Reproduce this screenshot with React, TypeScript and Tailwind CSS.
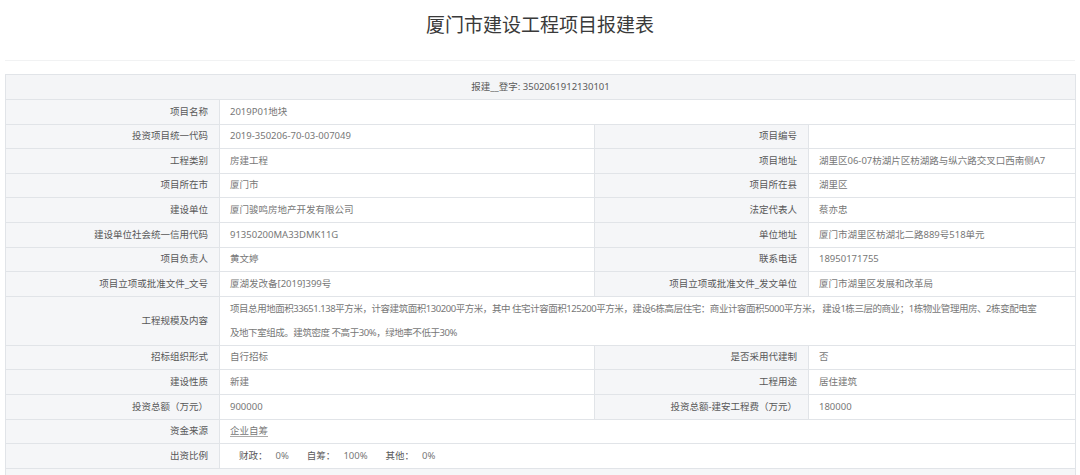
import type { ReactNode } from 'react';

const font = { fontFamily: '"Noto Sans", "Noto Sans CJK SC", sans-serif' };

function Label({ children }: { children?: ReactNode }) {
  return (
    <td className="h-[24.6px] border border-[#e1e4e8] bg-[#f5f6f8] pr-[11px] text-right align-middle text-[#585858] whitespace-nowrap">
      {children}
    </td>
  );
}

function Value({ children, span = 1 }: { children?: ReactNode; span?: number }) {
  return (
    <td
      colSpan={span}
      className="h-[24.6px] border border-[#e1e4e8] bg-white pl-[10px] text-left align-middle text-[#777] whitespace-nowrap"
    >
      {children}
    </td>
  );
}

const pairs: [string, string, string, string][] = [
  ['投资项目统一代码', '2019-350206-70-03-007049', '项目编号', ''],
  ['工程类别', '房建工程', '项目地址', '湖里区06-07枋湖片区枋湖路与纵六路交叉口西南侧A7'],
  ['项目所在市', '厦门市', '项目所在县', '湖里区'],
  ['建设单位', '厦门骏鸣房地产开发有限公司', '法定代表人', '蔡亦忠'],
  ['建设单位社会统一信用代码', '91350200MA33DMK11G', '单位地址', '厦门市湖里区枋湖北二路889号518单元'],
  ['项目负责人', '黄文婷', '联系电话', '18950171755'],
  ['项目立项或批准文件_文号', '厦湖发改备[2019]399号', '项目立项或批准文件_发文单位', '厦门市湖里区发展和改革局'],
];

const lowerPairs: [string, string, string, string][] = [
  ['招标组织形式', '自行招标', '是否采用代建制', '否'],
  ['建设性质', '新建', '工程用途', '居住建筑'],
  ['投资总额（万元）', '900000', '投资总额-建安工程费（万元）', '180000'],
];

export default function App() {
  return (
    <div className="h-[475px] w-[1080px] overflow-hidden bg-white text-[9.5px]" style={font}>
      {/* Title */}
      <div className="flex h-[50px] items-center justify-center">
        <h1 className="text-[19px] font-normal text-[#3a3a3a]">厦门市建设工程项目报建表</h1>
      </div>
      <div className="mx-[5px] mt-[10px] h-px bg-[#f1f2f3]" />

      {/* Form table */}
      <table className="mx-[5px] mt-[13px] w-[1070px] table-fixed border-collapse">
        <colgroup>
          <col className="w-[214px]" />
          <col className="w-[375px]" />
          <col className="w-[214px]" />
          <col className="w-[267px]" />
        </colgroup>
        <tbody>
          <tr>
            <td
              colSpan={4}
              className="h-[25px] border border-[#e1e4e8] bg-[#f4f5f7] text-center align-middle text-[#5a5a5a]"
            >
              报建__登字: 3502061912130101
            </td>
          </tr>
          <tr>
            <Label>项目名称</Label>
            <Value span={3}>2019P01地块</Value>
          </tr>
          {pairs.map(([a, b, c, d]) => (
            <tr key={a}>
              <Label>{a}</Label>
              <Value>{b}</Value>
              <Label>{c}</Label>
              <Value>{d}</Value>
            </tr>
          ))}
          <tr>
            <Label>工程规模及内容</Label>
            <td
              colSpan={3}
              className="h-[48px] overflow-hidden border border-[#e1e4e8] bg-white pl-[10px] text-left align-middle leading-[24px] tracking-[-0.45px] text-[#777] whitespace-nowrap"
            >
              项目总用地面积33651.138平方米，计容建筑面积130200平方米，其中 住宅计容面积125200平方米，建设6栋高层住宅：商业计容面积5000平方米， 建设1栋三层的商业；1栋物业管理用房、2栋变配电室
              <br />
              及地下室组成。建筑密度 不高于30%，绿地率不低于30%
            </td>
          </tr>
          {lowerPairs.map(([a, b, c, d]) => (
            <tr key={a}>
              <Label>{a}</Label>
              <Value>{b}</Value>
              <Label>{c}</Label>
              <Value>{d}</Value>
            </tr>
          ))}
          <tr>
            <Label>资金来源</Label>
            <Value span={3}>
              <span className="underline decoration-[#aaa] underline-offset-2">企业自筹</span>
            </Value>
          </tr>
          <tr>
            <Label>出资比例</Label>
            <Value span={3}>
              <span className="ml-[9px] text-[#5a5a5a]">财政：</span>
              <span className="ml-[8px]">0%</span>
              <span className="ml-[18px] text-[#5a5a5a]">自筹：</span>
              <span className="ml-[8px]">100%</span>
              <span className="ml-[18px] text-[#5a5a5a]">其他：</span>
              <span className="ml-[8px]">0%</span>
            </Value>
          </tr>
          <tr>
            <td colSpan={4} className="h-[25px] border border-[#e1e4e8] bg-[#f5f6f8]" />
          </tr>
        </tbody>
      </table>
    </div>
  );
}
